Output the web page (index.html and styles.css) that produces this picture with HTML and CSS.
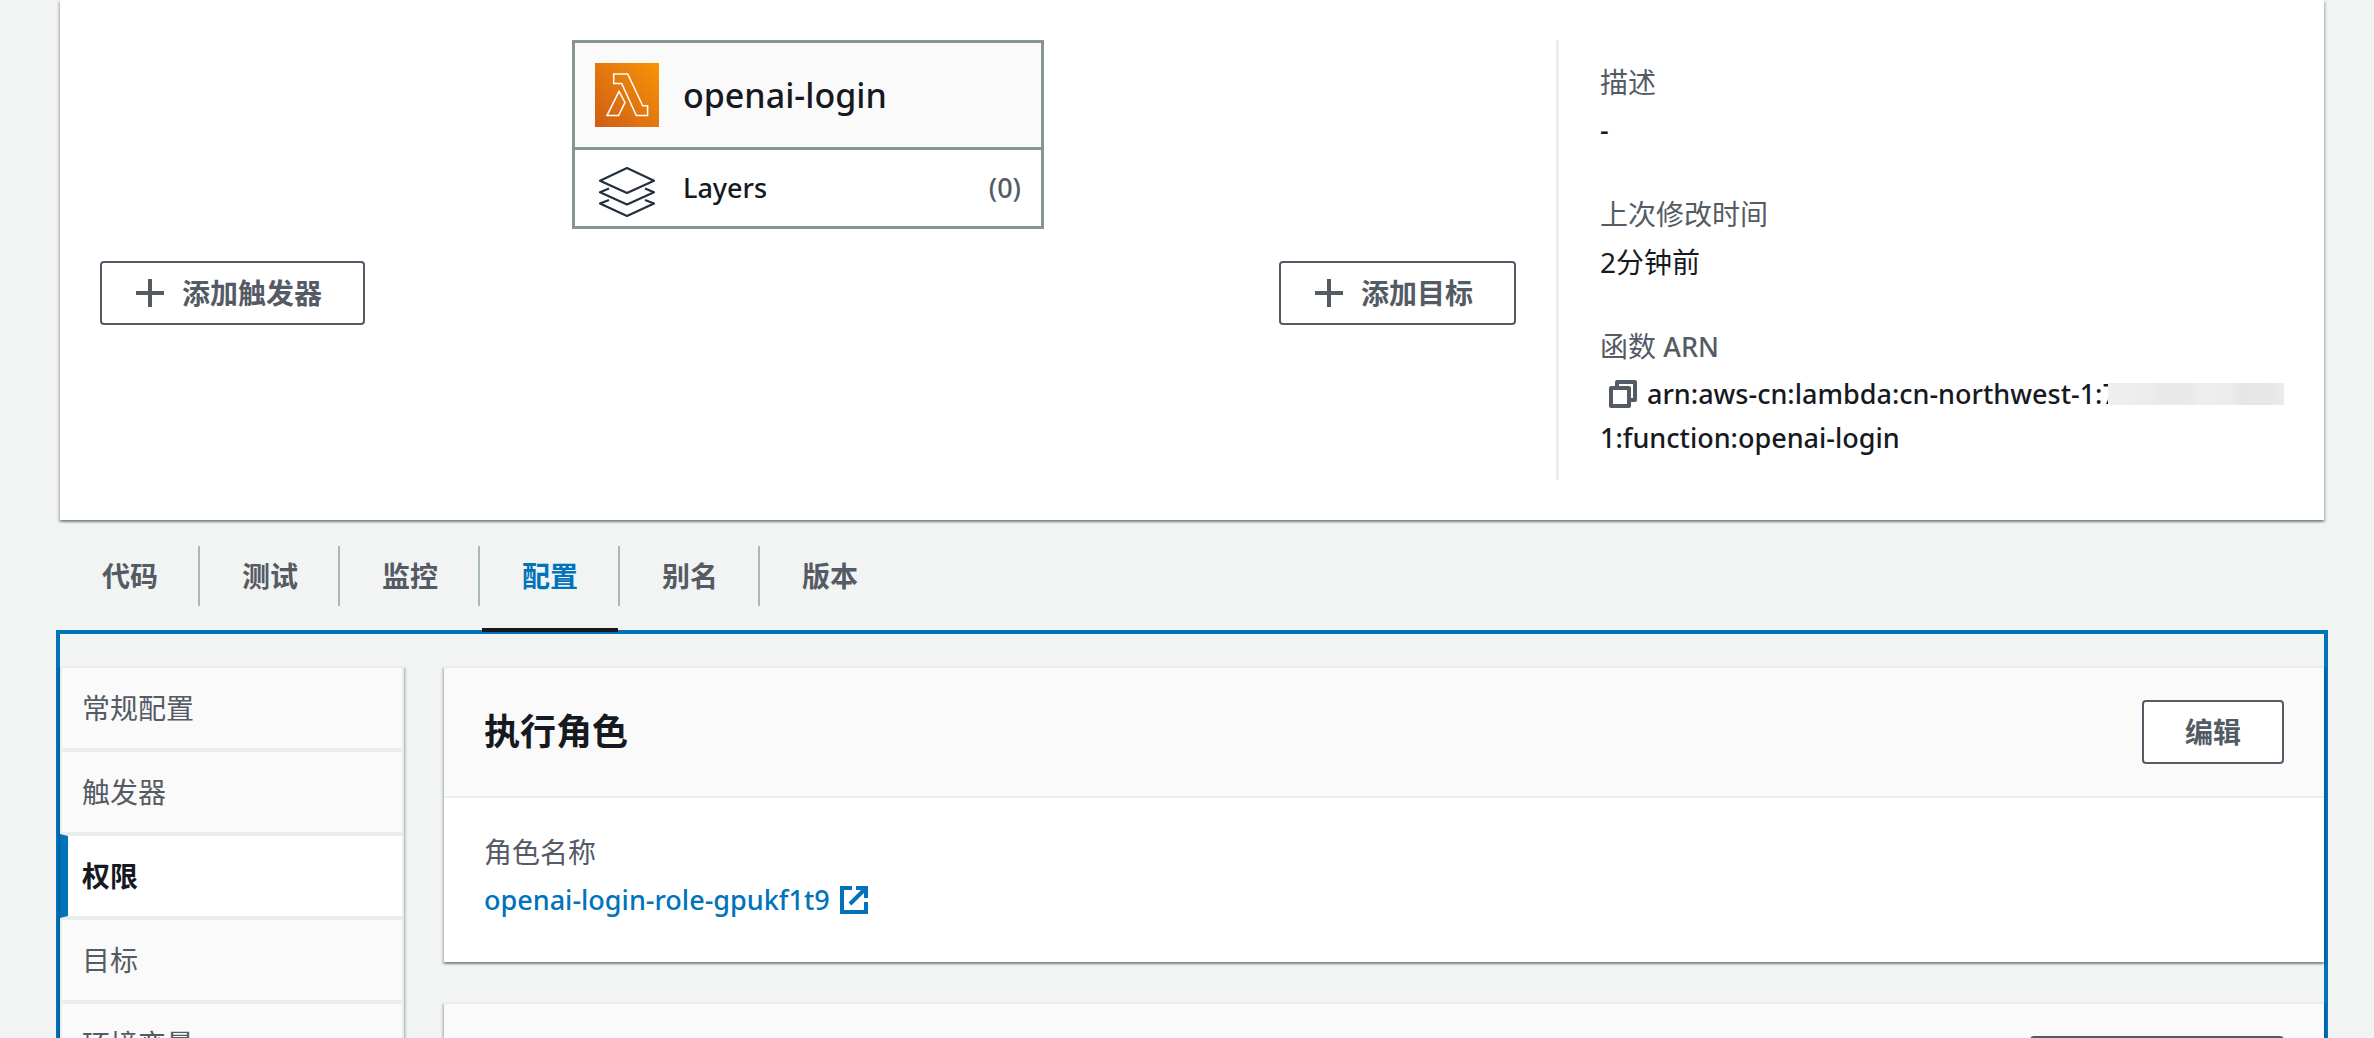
FILE: index.html
```html
<!DOCTYPE html>
<html lang="zh-CN">
<head>
  <meta charset="UTF-8">
  <meta name="viewport" content="width=device-width, initial-scale=1.0">
  <title>openai-login</title>
  <link rel="stylesheet" href="styles.css">
</head>

<body>
  <main class="page">
    <section class="overview">
      <div class="designer">
        <div class="function-box">
          <div class="function-head">
            <svg class="service-icon" viewBox="0 0 64 64" aria-hidden="true">
              <defs>
                <linearGradient id="lambdaFill" x1="0" y1="1" x2="1" y2="0">
                  <stop offset="0" stop-color="#d05c17"/>
                  <stop offset="1" stop-color="#f89406"/>
                </linearGradient>
              </defs>
              <rect width="64" height="64" fill="url(#lambdaFill)"/>
              <path d="M18.7 10.9H32.7L47.7 42.7H52.6V52.6H41.3L26.7 20.4H18.7ZM24 28.4L30 39.4L23.6 52.6H12Z" fill="none" stroke="#fff" stroke-width="1.5"/>
            </svg>
            <span class="function-name">openai-login</span>
          </div>
          <div class="function-layers">
            <svg class="service-icon" viewBox="0 0 64 64" fill="none" stroke="#232f3e" stroke-width="2.2" stroke-linejoin="round" aria-hidden="true">
              <path d="M32 12L59 24.7L32 37L5 24.7Z"/>
              <path d="M14 32.5L5 36.3L32 48.4L59 36.3L50 32.5"/>
              <path d="M14 44L5 47.6L32 60L59 47.6L50 44"/>
            </svg>
            <span class="latin">Layers</span>
            <span class="latin count">(0)</span>
          </div>
        </div>
        <div class="designer-actions">
          <button type="button" class="btn btn-icon">
            <svg class="icon" viewBox="0 0 28 28" aria-hidden="true"><path d="M14 0V28M0 14H28"/></svg>
            添加触发器
          </button>
          <button type="button" class="btn btn-icon">
            <svg class="icon" viewBox="0 0 28 28" aria-hidden="true"><path d="M14 0V28M0 14H28"/></svg>
            添加目标
          </button>
        </div>
      </div>

      <dl class="details">
        <div class="field">
          <dt>描述</dt>
          <dd class="latin">-</dd>
        </div>
        <div class="field">
          <dt>上次修改时间</dt>
          <dd>2分钟前</dd>
        </div>
        <div class="field">
          <dt>函数 <span class="latin">ARN</span></dt>
          <dd class="latin">
            <div class="arn">
              <svg class="icon copy" viewBox="0 0 28 28" aria-hidden="true"><path d="M2 8H20V26H2ZM8 8V2H26V20H20" stroke-linejoin="round"/></svg>
              <span>arn:aws-cn:lambda:cn-northwest-1:</span>
              <span class="arn-digit">7</span>
              <span class="arn-mask"></span>
            </div>
            1:function:openai-login
          </dd>
        </div>
      </dl>
    </section>

    <nav class="tabs">
      <a href="#code">代码</a>
      <a href="#test">测试</a>
      <a href="#monitor">监控</a>
      <a href="#config" class="active">配置</a>
      <a href="#aliases">别名</a>
      <a href="#versions">版本</a>
    </nav>

    <div class="panel" id="config">
      <nav class="side">
        <a href="#general">常规配置</a>
        <a href="#triggers">触发器</a>
        <a href="#permissions" class="active">权限</a>
        <a href="#destinations">目标</a>
        <a href="#environment">环境变量</a>
      </nav>

      <div class="cards">
        <section class="card">
          <header class="card-head">
            <h2>执行角色</h2>
            <button type="button" class="btn">编辑</button>
          </header>
          <dl class="card-body">
            <dt>角色名称</dt>
            <dd class="latin role">
              <a href="#role" class="role-link">openai-login-role-gpukf1t9
                <svg class="icon" viewBox="0 0 28 28" aria-hidden="true"><path d="M12 2H2V26H26V16M16 2H26V12M26 2L10 18"/></svg>
              </a>
            </dd>
          </dl>
        </section>

        <section class="card">
          <header class="card-head">
            <h2></h2>
            <button type="button" class="btn btn-wide"></button>
          </header>
        </section>
      </div>
    </div>
  </main>
</body>
</html>
```
FILE: styles.css
```css
* {
  box-sizing: border-box;
}

body {
  margin: 0;
  background: #f2f3f3;
  color: #16191f;
  font-family: "Noto Sans", "Noto Sans CJK SC", sans-serif;
  font-size: 28px;
  line-height: 44px;
}

a {
  color: inherit;
  text-decoration: none;
}

dl,
dd,
h2 {
  margin: 0;
}

dt {
  margin-bottom: 4px;
  color: #545b64;
}

.page {
  height: 100vh;
  padding: 0 50px 0 60px;
  overflow: hidden;
}

.latin {
  font-size: 27px;
  font-weight: 500;
}

dt .latin {
  line-height: 1;
}

.icon {
  flex: none;
  width: 28px;
  height: 28px;
  fill: none;
  stroke: currentColor;
  stroke-width: 4;
}

.btn {
  height: 64px;
  padding: 0 41px;
  border: 2px solid #545b64;
  border-radius: 4px;
  background: #fff;
  color: #545b64;
  font: inherit;
  font-weight: 700;
}

.btn-icon {
  display: flex;
  align-items: center;
  gap: 18px;
  padding-left: 34px;
}

.btn-wide {
  width: 254px;
}

/* overview */
.overview {
  display: grid;
  grid-template-columns: minmax(0, 2fr) minmax(0, 1fr);
  padding: 40px 20px 40px 0;
  background: #fff;
}

.overview,
.card,
.side {
  box-shadow: 0 2px 2px rgba(0, 28, 36, 0.3), 2px 2px 2px rgba(0, 28, 36, 0.15), -2px 2px 2px rgba(0, 28, 36, 0.15);
}

.designer {
  padding: 0 40px;
}

.function-box {
  width: 472px;
  margin: 0 auto 32px;
  border: 3px solid #879596;
}

.function-head,
.function-layers {
  display: flex;
  align-items: center;
  gap: 24px;
  padding: 0 20px;
}

.function-head {
  height: 107px;
  border-bottom: 3px solid #879596;
  background: #fafafa;
}

.function-layers {
  height: 76px;
}

.service-icon {
  flex: none;
  width: 64px;
  height: 64px;
}

.function-name {
  font-size: 34px;
  font-weight: 500;
}

.count {
  margin-left: auto;
  color: #545b64;
}

.designer-actions {
  display: flex;
  justify-content: space-between;
}

.details {
  padding: 20px 20px 20px 41px;
  border-left: 3px solid #eaeded;
}

.field + .field {
  margin-top: 40px;
}

.arn {
  display: flex;
  align-items: center;
  white-space: nowrap;
}

.copy {
  margin: 0 10px 0 9px;
  color: #545b64;
}

.arn-digit {
  width: 6px;
  overflow: hidden;
}

.arn-mask {
  flex: 1;
  height: 22px;
  background: linear-gradient(90deg, #efefef, #ececec 25%, #e8e8e8 30%, #eaeaea 48%, #eeeeee 52%, #ececec 70%, #e6e6e6 76%, #e7e7e7 92%, #ececec);
}

/* tabs */
.tabs {
  display: flex;
  margin-top: 26px;
}

.tabs a {
  position: relative;
  height: 84px;
  padding: 8px 42px;
  color: #545b64;
  font-weight: 700;
}

.tabs a:not(:last-child)::before {
  content: "";
  position: absolute;
  top: 0;
  right: 0;
  width: 2px;
  height: 60px;
  background: #aab7b8;
}

.tabs .active {
  color: #0073bb;
}

.tabs .active::after {
  content: "";
  position: absolute;
  right: 2px;
  bottom: -2px;
  left: 2px;
  z-index: 1;
  height: 4px;
  background: #16191f;
}

/* configuration panel */
.panel {
  display: flex;
  gap: 40px;
  margin: 0 -4px;
  padding-top: 32px;
  border: 4px solid #0073bb;
}

.side {
  flex: none;
  width: 344px;
}

.side a {
  display: block;
  padding: 18px 20px;
  border: 2px solid #eaeded;
  background: #fafafa;
  color: #545b64;
}

.side .active {
  padding-left: 14px;
  border-left: 8px solid #0073bb;
  background: #fff;
  color: #16191f;
  font-weight: 700;
}

.cards {
  flex: 1;
  min-width: 0;
}

.card {
  margin-bottom: 40px;
  border-top: 2px solid #eaeded;
  background: #fff;
}

.card-head {
  display: flex;
  justify-content: space-between;
  align-items: center;
  padding: 32px 40px;
  border-bottom: 2px solid #eaeded;
  background: #fafafa;
}

.card-head h2 {
  font-size: 36px;
}

.card-body {
  padding: 32px 40px 40px;
}

.role {
  display: flex;
}

.role-link {
  display: flex;
  align-items: center;
  gap: 10px;
  color: #0073bb;
}
```
